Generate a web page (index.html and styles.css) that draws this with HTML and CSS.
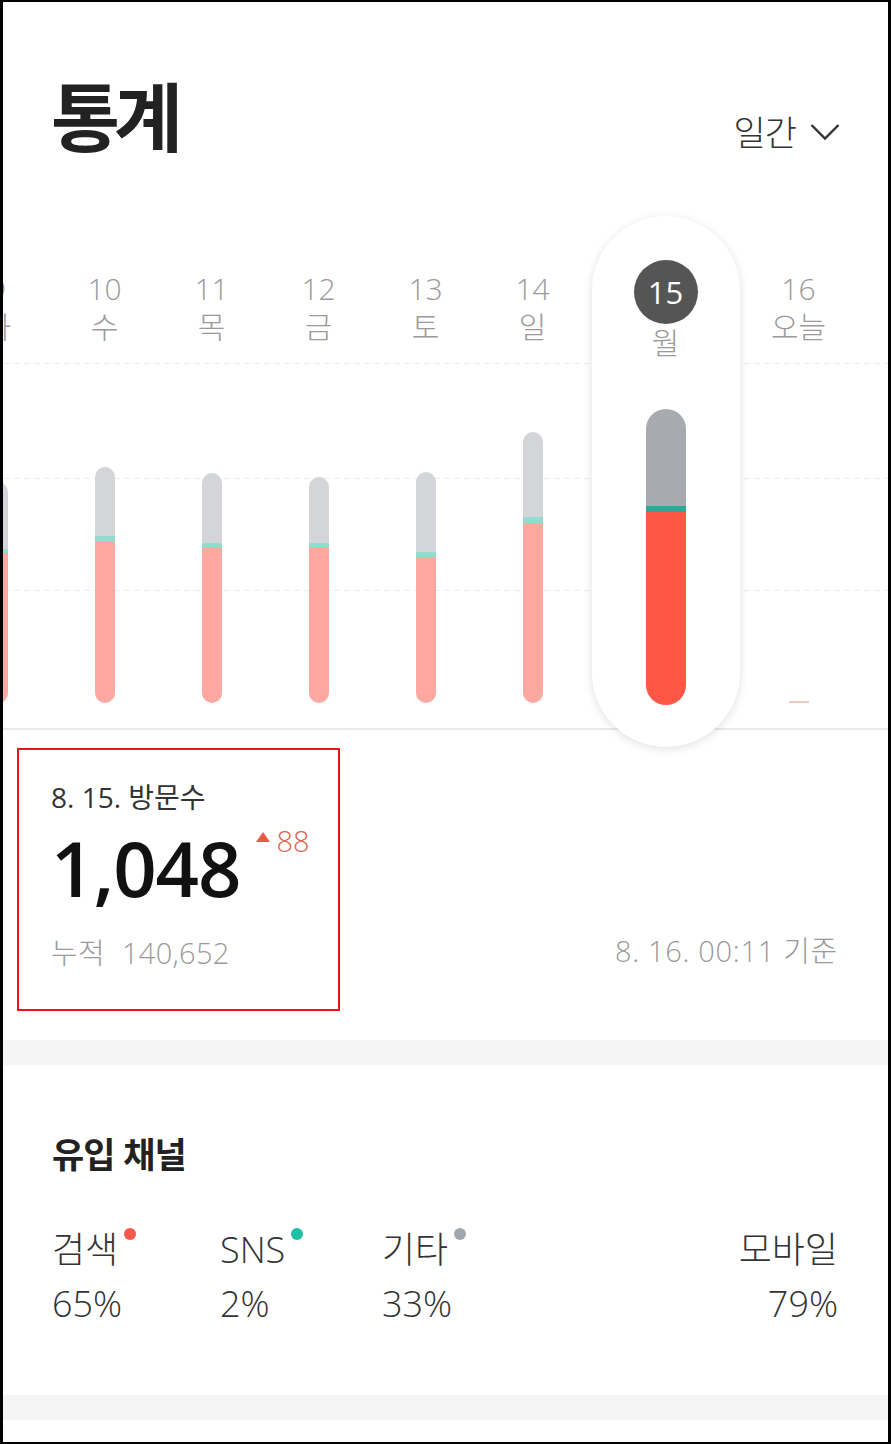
FILE: index.html
```html
<!DOCTYPE html>
<html lang="ko">
<head>
    <meta charset="UTF-8">
    <meta name="viewport" content="width=device-width, initial-scale=1.0">
    <title>통계</title>
    <link rel="stylesheet" href="styles.css">
</head>
<body>
    <div class="screen">
        <header class="top">
            <h1 class="title">통계</h1>
            <div class="period">일간
                <svg class="chevron" width="30" height="18" viewBox="0 0 30 18"><polyline points="1.5,2 15,15.5 28.5,2" fill="none" stroke="#333" stroke-width="2.4"/></svg>
            </div>
        </header>

        <section class="chart">
            <div class="day">
                <div class="day-label"><span class="day-num">9</span><span class="day-name">화</span></div>
                <div class="bar-area">
                    <div class="bar" style="height: 221px;"><i class="seg-rest"></i><i class="seg-sns" style="height: 4px;"></i><i class="seg-search" style="height: 150px;"></i></div>
                </div>
            </div>
            <div class="day">
                <div class="day-label"><span class="day-num">10</span><span class="day-name">수</span></div>
                <div class="bar-area">
                    <div class="bar" style="height: 236px;"><i class="seg-rest"></i><i class="seg-sns" style="height: 6px;"></i><i class="seg-search" style="height: 161px;"></i></div>
                </div>
            </div>
            <div class="day">
                <div class="day-label"><span class="day-num">11</span><span class="day-name">목</span></div>
                <div class="bar-area">
                    <div class="bar" style="height: 230px;"><i class="seg-rest"></i><i class="seg-sns" style="height: 4px;"></i><i class="seg-search" style="height: 156px;"></i></div>
                </div>
            </div>
            <div class="day">
                <div class="day-label"><span class="day-num">12</span><span class="day-name">금</span></div>
                <div class="bar-area">
                    <div class="bar" style="height: 226px;"><i class="seg-rest"></i><i class="seg-sns" style="height: 4px;"></i><i class="seg-search" style="height: 156px;"></i></div>
                </div>
            </div>
            <div class="day">
                <div class="day-label"><span class="day-num">13</span><span class="day-name">토</span></div>
                <div class="bar-area">
                    <div class="bar" style="height: 231px;"><i class="seg-rest"></i><i class="seg-sns" style="height: 5px;"></i><i class="seg-search" style="height: 146px;"></i></div>
                </div>
            </div>
            <div class="day">
                <div class="day-label"><span class="day-num">14</span><span class="day-name">일</span></div>
                <div class="bar-area">
                    <div class="bar" style="height: 271px;"><i class="seg-rest"></i><i class="seg-sns" style="height: 6px;"></i><i class="seg-search" style="height: 180px;"></i></div>
                </div>
            </div>
            <div class="day day-active">
                <div class="pill">
                    <span class="day-circle">15</span>
                    <span class="day-name">월</span>
                    <div class="bar-area">
                        <div class="bar bar-big" style="height: 296px;"><i class="seg-rest"></i><i class="seg-sns" style="height: 6px;"></i><i class="seg-search" style="height: 193px;"></i></div>
                    </div>
                </div>
            </div>
            <div class="day">
                <div class="day-label"><span class="day-num">16</span><span class="day-name">오늘</span></div>
                <div class="bar-area">
                    <div class="bar-empty"></div>
                </div>
            </div>
        </section>

        <section class="summary">
            <div class="visit-card">
                <p class="visit-date">8. 15. 방문수</p>
                <div class="visit-count">
                    <strong>1,048</strong>
                    <span class="visit-diff"><i class="tri"></i>88</span>
                </div>
                <p class="visit-total">누적<span>140,652</span></p>
            </div>
            <p class="updated">8. 16. 00:11 기준</p>
        </section>

        <div class="gap"></div>

        <section class="channels">
            <h2 class="channels-title">유입 채널</h2>
            <div class="channel-grid">
                <div class="channel"><span class="channel-name">검색<i class="dot dot-search"></i></span><span class="channel-pct">65%</span></div>
                <div class="channel"><span class="channel-name">SNS<i class="dot dot-sns"></i></span><span class="channel-pct">2%</span></div>
                <div class="channel"><span class="channel-name">기타<i class="dot dot-etc"></i></span><span class="channel-pct">33%</span></div>
                <div class="channel channel-right"><span class="channel-name">모바일</span><span class="channel-pct">79%</span></div>
            </div>
        </section>

        <div class="gap"></div>
    </div>
</body>
</html>
```

FILE: styles.css
```css
*{ padding: 0; margin: 0; box-sizing: border-box; }

body{
    font-family: "Open Sans", "Noto Sans CJK KR", sans-serif;
    color: #333;
    background: #fff;
}

.screen{
    width: 891px;
    height: 1444px;
    border: 3px solid #000;
    border-top-width: 2px;
    border-bottom-width: 2px;
    overflow: hidden;
    background: #fff;
}

/* header */
.top{
    display: flex;
    justify-content: space-between;
    align-items: baseline;
    height: 214px;
    padding: 67px 48px 0 48px;
}
.title{
    font-family: "Noto Sans CJK KR", sans-serif;
    font-size: 75px;
    line-height: 90px;
    font-weight: 700;
    letter-spacing: -6px;
    color: #222;
}
.period{
    display: flex;
    align-items: center;
    gap: 14px;
    font-family: "Noto Sans CJK KR", sans-serif;
    font-size: 35px;
    font-weight: 300;
    letter-spacing: -1px;
    color: #333;
}
.chevron{ margin-top: 2px; }

/* chart */
.chart{
    display: flex;
    height: 531px;
    margin-left: -59px;
    background:
        linear-gradient(#e9e9e9, #e9e9e9) 0 512px / 100% 2px no-repeat,
        linear-gradient(to right, #ececec 6px, transparent 6px) 0 147px / 10px 1px repeat-x,
        linear-gradient(to right, #ececec 6px, transparent 6px) 0 262px / 10px 1px repeat-x,
        linear-gradient(to right, #ececec 6px, transparent 6px) 0 374px / 10px 1px repeat-x;
}
.day{
    flex: none;
    width: 107px;
    display: flex;
    flex-direction: column;
    align-items: center;
}
.day-label{
    display: flex;
    flex-direction: column;
    align-items: center;
    padding-top: 54px;
}
.day-num,
.day-name{
    font-size: 30px;
    line-height: 38px;
    font-weight: 300;
    color: #9a9a9a;
}
.bar-area{
    flex: 1;
    display: flex;
    flex-direction: column;
    justify-content: flex-end;
    padding-bottom: 44px;
}
.bar{
    width: 20px;
    border-radius: 10px;
    overflow: hidden;
    display: flex;
    flex-direction: column;
}
.bar i{ display: block; }
.seg-rest{ flex: 1; background: #d3d5d8; }
.seg-sns{ background: #92dcd0; }
.seg-search{ background: #fea8a1; }

.bar-empty{
    width: 20px;
    height: 2px;
    background: #efcac3;
}

/* selected day */
.day-active{
    width: 159px;
}
.pill{
    width: 148px;
    height: 100%;
    border-radius: 74px;
    background: #fff;
    box-shadow: 0 2px 10px rgba(0, 0, 0, .12);
    display: flex;
    flex-direction: column;
    align-items: center;
    padding-top: 44px;
}
.day-circle{
    width: 64px;
    height: 64px;
    border-radius: 50%;
    background: #555;
    color: #fff;
    font-size: 31px;
    line-height: 64px;
    text-align: center;
}
.pill .bar-area{ padding-bottom: 42px; }
.bar-big{
    width: 40px;
    border-radius: 20px;
}
.bar-big .seg-rest{ background: #a7aaae; }
.bar-big .seg-sns{ background: #2aa995; }
.bar-big .seg-search{ background: #ff5645; }

/* summary */
.summary{
    display: flex;
    justify-content: space-between;
    align-items: flex-end;
    padding: 1px 50px 0 14px;
}
.visit-card{
    width: 323px;
    height: 263px;
    border: 2px solid #e3161b;
    padding: 27px 0 0 32px;
}
.visit-date{
    font-size: 28px;
    line-height: 40px;
    color: #333;
}
.visit-count{
    display: flex;
    align-items: flex-start;
    margin-top: 6px;
}
.visit-count strong{
    font-size: 76px;
    line-height: 90px;
    font-weight: 560;
    color: #111;
    letter-spacing: -1px;
}
.visit-diff{
    display: flex;
    align-items: center;
    margin: 0 0 0 15px;
    font-size: 29px;
    line-height: 36px;
    font-weight: 300;
    color: #e0604e;
}
.tri{
    width: 0;
    height: 0;
    border-left: 7px solid transparent;
    border-right: 7px solid transparent;
    border-bottom: 10px solid #e85a48;
    margin: -8px 7px 0 0;
}
.visit-total,
.updated{
    font-size: 29px;
    line-height: 40px;
    font-weight: 300;
    color: #9a9a9a;
    letter-spacing: .3px;
}
.updated{ letter-spacing: .7px; }
.visit-total{ margin-top: 20px; }
.visit-total span{ margin-left: 17px; }
.updated{ margin-bottom: 40px; }

.gap{
    height: 25px;
    background: #f5f5f5;
}
.summary + .gap{ margin-top: 29px; }

/* channels */
.channels{
    height: 330px;
    padding: 64px 50px 0 49px;
}
.channels-title{
    font-family: "Noto Sans CJK KR", sans-serif;
    font-size: 35px;
    line-height: 48px;
    font-weight: 700;
    color: #222;
    letter-spacing: -1px;
}
.channel-grid{
    display: grid;
    grid-template-columns: 168px 162px 1fr auto;
    margin-top: 46px;
}
.channel{
    display: flex;
    flex-direction: column;
    align-items: flex-start;
}
.channel-right{ align-items: flex-end; }
.channel-name,
.channel-pct{
    position: relative;
    font-size: 36px;
    line-height: 54px;
    font-weight: 300;
    color: #333;
}
.dot{
    position: absolute;
    top: 5px;
    right: -18px;
    width: 12px;
    height: 12px;
    border-radius: 50%;
}
.dot-search{ background: #f55a4a; }
.dot-sns{ background: #1fbfa5; }
.dot-etc{ background: #a2a7af; }
```
